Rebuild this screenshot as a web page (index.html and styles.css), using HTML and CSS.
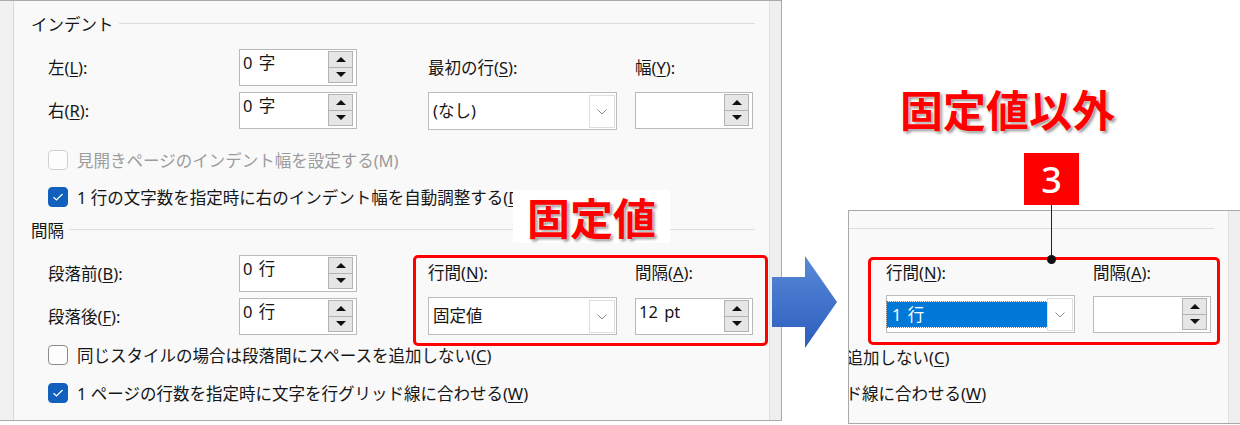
FILE: index.html
```html
<!DOCTYPE html>
<html lang="ja">
<head>
    <meta charset="UTF-8">
    <title>段落 - 行間</title>
    <link rel="stylesheet" href="styles.css">
</head>
<body>
    <div class="stage">
        <section class="dialog">
            <div class="edge"></div>
            <div class="pane">
                <div class="group-title">インデント</div>
                <div class="fields">
                    <span class="label">左(<u>L</u>):</span>
                    <div class="spin"><span class="val">0 字</span><div class="spin-btns"><i class="up"></i><i class="down"></i></div></div>
                    <span class="label">最初の行(<u>S</u>):</span>
                    <span class="label">幅(<u>Y</u>):</span>
                    <span class="label">右(<u>R</u>):</span>
                    <div class="spin"><span class="val">0 字</span><div class="spin-btns"><i class="up"></i><i class="down"></i></div></div>
                    <div class="combo"><span class="val">(なし)</span><span class="drop"><svg width="10" height="6" viewBox="0 0 10 6"><path d="M0.5 0.5L5 5L9.5 0.5" stroke="#8a8a8a" fill="none"/></svg></span></div>
                    <div class="spin"><span class="val"></span><div class="spin-btns"><i class="up"></i><i class="down"></i></div></div>
                </div>
                <div class="checks">
                    <div class="check off"><span class="box"></span><span>見開きページのインデント幅を設定する(M)</span></div>
                    <div class="check"><span class="box on"><svg width="12" height="10" viewBox="0 0 12 10"><path d="M1.5 5.2L4.5 8L10.5 2" stroke="#fff" stroke-width="1.2" fill="none"/></svg></span><span>1 行の文字数を指定時に右のインデント幅を自動調整する(<u>D</u>)</span></div>
                </div>
                <div class="group-title second">間隔</div>
                <div class="spacing">
                    <div class="fields pair">
                        <span class="label">段落前(<u>B</u>):</span>
                        <div class="spin"><span class="val">0 行</span><div class="spin-btns"><i class="up"></i><i class="down"></i></div></div>
                        <span class="label">段落後(<u>F</u>):</span>
                        <div class="spin"><span class="val">0 行</span><div class="spin-btns"><i class="up"></i><i class="down"></i></div></div>
                    </div>
                    <div class="mark">
                        <span class="label">行間(<u>N</u>):</span>
                        <span class="label">間隔(<u>A</u>):</span>
                        <div class="combo"><span class="val">固定値</span><span class="drop"><svg width="10" height="6" viewBox="0 0 10 6"><path d="M0.5 0.5L5 5L9.5 0.5" stroke="#8a8a8a" fill="none"/></svg></span></div>
                        <div class="spin"><span class="val">12 pt</span><div class="spin-btns"><i class="up"></i><i class="down"></i></div></div>
                    </div>
                </div>
                <div class="checks lower">
                    <div class="check"><span class="box"></span><span>同じスタイルの場合は段落間にスペースを追加しない(<u>C</u>)</span></div>
                    <div class="check"><span class="box on"><svg width="12" height="10" viewBox="0 0 12 10"><path d="M1.5 5.2L4.5 8L10.5 2" stroke="#fff" stroke-width="1.2" fill="none"/></svg></span><span>1 ページの行数を指定時に文字を行グリッド線に合わせる(<u>W</u>)</span></div>
                </div>
                <div class="callout">固定値</div>
            </div>
            <div class="scroll"></div>
        </section>

        <div class="arrow">
            <svg width="66" height="92" viewBox="0 0 66 92">
                <defs>
                    <linearGradient id="arrowFill" x1="0" y1="0" x2="0" y2="1">
                        <stop offset="0" stop-color="#5a89d7"/>
                        <stop offset="1" stop-color="#2c5dbe"/>
                    </linearGradient>
                </defs>
                <path d="M0 21H33V0L65 46L33 92V71H0Z" fill="url(#arrowFill)"/>
            </svg>
        </div>

        <div class="after">
            <div class="title">固定値以外</div>
            <div class="badge">3</div>
            <section class="dialog panel">
                <div class="pane clip">
                    <div class="rule"></div>
                    <div class="mark wide">
                        <span class="label">行間(<u>N</u>):</span>
                        <span class="label">間隔(<u>A</u>):</span>
                        <div class="combo"><span class="val sel">1 行</span><span class="drop"><svg width="10" height="6" viewBox="0 0 10 6"><path d="M0.5 0.5L5 5L9.5 0.5" stroke="#8a8a8a" fill="none"/></svg></span></div>
                        <div class="spin"><span class="val"></span><div class="spin-btns"><i class="up"></i><i class="down"></i></div></div>
                    </div>
                    <div class="checks tail">
                        <div class="check"><span class="box"></span><span>同じスタイルの場合は段落間にスペースを追加しない(<u>C</u>)</span></div>
                        <div class="check"><span class="box on"></span><span>1 ページの行数を指定時に文字を行グリッド線に合わせる(<u>W</u>)</span></div>
                    </div>
                </div>
                <div class="scroll"></div>
            </section>
        </div>
    </div>
</body>
</html>
```

FILE: styles.css
```css
body {
    margin: 0;
    background: #fff;
    font-family: "Noto Sans", "Noto Sans CJK JP", sans-serif;
    color: #161616;
    overflow: hidden;
}
u {
    text-underline-offset: 2px;
}
.stage {
    display: flex;
    align-items: flex-start;
    width: 1240px;
    height: 425px;
}
.dialog {
    width: 782px;
    height: 421px;
    box-sizing: border-box;
    border: 1px solid #a9a9a9;
    border-left: 0;
    display: flex;
    background: #f9f9f9;
    flex-shrink: 0;
}
.edge {
    width: 13px;
    flex-shrink: 0;
    background: #f1f1f1;
    border-right: 1px solid #d9d9d9;
}
.scroll {
    width: 11px;
    flex-shrink: 0;
    background: #efefef;
    border-left: 1px solid #e0e0e0;
}
.pane {
    flex: 1;
    min-width: 0;
    position: relative;
    padding: 12px 14px 0 17px;
}
.group-title {
    display: flex;
    align-items: center;
    gap: 5px;
    height: 24px;
    font-size: 16.5px;
    line-height: 24px;
}
.group-title::after {
    content: "";
    flex: 1;
    height: 1px;
    margin-top: -3px;
    background: #dedede;
}
.group-title.second {
    margin-top: 4px;
}
.fields {
    display: grid;
    grid-template-columns: 191px 189px 207px 119px;
    grid-auto-rows: 37px;
    row-gap: 6px;
    margin: 12px 0 0 17px;
}
.label {
    align-self: center;
    font-size: 16.5px;
    line-height: 24px;
    white-space: nowrap;
}
.spin {
    width: 118px;
    height: 37px;
    box-sizing: border-box;
    border: 1px solid #bababa;
    background: #fff;
    display: flex;
    align-self: end;
}
.spin .val {
    flex: 1;
    padding: 1px 0 0 3px;
    font-size: 16.5px;
    line-height: 24px;
    word-spacing: 2px;
}
.spin-btns {
    display: flex;
    flex-direction: column;
    width: 25px;
    margin: 1px 3px 2px 0;
}
.spin-btns i {
    flex: 1;
    display: flex;
    align-items: center;
    justify-content: center;
    border: 1px solid #b3b3b3;
    background: #e6e6e6;
}
.spin-btns i + i {
    margin-top: -1px;
}
.spin-btns i::before {
    content: "";
    border-left: 5px solid transparent;
    border-right: 5px solid transparent;
}
.spin-btns .up::before {
    border-bottom: 5px solid #111;
}
.spin-btns .down::before {
    border-top: 5px solid #111;
}
.combo {
    width: 189px;
    height: 38px;
    box-sizing: border-box;
    border: 1px solid #bdbdbd;
    background: #fff;
    display: flex;
    align-items: center;
}
.combo .val {
    flex: 1;
    padding-left: 4px;
    font-size: 16.5px;
    line-height: 24px;
    word-spacing: 2px;
}
.combo .drop {
    width: 26px;
    height: 33px;
    box-sizing: border-box;
    margin: 1px 1px 0 0;
    border: 1px solid #dedede;
    background: #fff;
    display: flex;
    align-items: center;
    justify-content: center;
}
.combo .val.sel {
    align-self: stretch;
    margin: 6px 0 5px 0;
    padding-left: 5px;
    background: #0078d7;
    color: #fff;
    outline: 1px dotted #7a7a7a;
    display: flex;
    align-items: center;
}
.checks {
    margin-top: 12px;
}
.check {
    display: flex;
    align-items: center;
    gap: 9px;
    height: 37px;
    margin-left: 17px;
    font-size: 16.5px;
    white-space: nowrap;
}
.checks.lower {
    margin-top: 1px;
}
.checks.lower .check {
    height: 38px;
}
.box {
    width: 20px;
    height: 20px;
    box-sizing: border-box;
    border: 1px solid #8b8b8b;
    border-radius: 4px;
    background: #fdfdfd;
    flex-shrink: 0;
    display: flex;
    align-items: center;
    justify-content: center;
}
.box.on {
    background: #1160bd;
    border-color: #1160bd;
}
.check.off {
    color: #9c9c9c;
}
.check.off .box {
    border-color: #cfcfcf;
}
.spacing {
    display: flex;
    align-items: flex-start;
    margin-top: 12px;
}
.fields.pair {
    margin-top: 0;
    grid-template-columns: 191px 118px;
}
.mark {
    flex-shrink: 0;
    margin: 0 0 -11px 56px;
    border: 3px solid #ff0000;
    border-radius: 5px;
    padding: 0 11px 8px 12px;
    display: grid;
    grid-template-columns: 207px 119px;
    grid-template-rows: 30px 38px;
    row-gap: 9px;
}
.mark .spin {
    align-self: end;
}
.callout {
    position: absolute;
    left: 499px;
    top: 189px;
    width: 157px;
    height: 53px;
    background: #fff;
    color: #ff0000;
    font-family: "Noto Sans CJK JP", sans-serif;
    font-size: 43px;
    font-weight: 700;
    line-height: 53px;
    text-align: center;
    text-shadow: 0 0 2px #fff, 2px 2px 3px rgba(0, 0, 0, 0.45);
}
.arrow {
    width: 66px;
    height: 92px;
    margin: 256px 10px 0 -10px;
    flex-shrink: 0;
    position: relative;
    z-index: 1;
}
.after {
    width: 392px;
    flex-shrink: 0;
    display: flex;
    flex-direction: column;
    align-items: flex-start;
}
.title {
    margin: 83px 0 0 52px;
    color: #ff0000;
    font-family: "Noto Sans CJK JP", sans-serif;
    font-size: 43px;
    font-weight: 700;
    line-height: 50px;
    white-space: nowrap;
    text-shadow: 0 0 2px #fff, 2px 2px 3px rgba(0, 0, 0, 0.45);
}
.badge {
    position: relative;
    z-index: 2;
    margin: 20px 0 0 176px;
    width: 55px;
    height: 52px;
    background: #ff0000;
    color: #fff;
    font-family: "Noto Sans", sans-serif;
    font-size: 36px;
    font-weight: 500;
    display: flex;
    align-items: center;
    justify-content: center;
}
.badge::before {
    content: "";
    position: absolute;
    top: 100%;
    left: 27px;
    width: 1px;
    height: 55px;
    background: #222;
}
.badge::after {
    content: "";
    position: absolute;
    top: 51px;
    left: 23px;
    width: 9px;
    height: 9px;
    margin-top: 51px;
    border-radius: 50%;
    background: #111;
}
.panel {
    width: 392px;
    height: 214px;
    margin-top: 5px;
    border-left: 1px solid #a9a9a9;
    border-right: 0;
}
.pane.clip {
    overflow: hidden;
    padding: 17px 0 0 0;
}
.rule {
    height: 1px;
    margin-right: 14px;
    background: #dedede;
}
.mark.wide {
    margin: 28px 0 -6px 19px;
    width: max-content;
    padding: 0 6px 9px 15px;
    grid-template-columns: 207px 118px;
    grid-template-rows: 26px 38px;
}
.checks.tail {
    margin-top: 0;
}
.checks.tail .check {
    height: 36px;
    margin-left: -343px;
}
```
